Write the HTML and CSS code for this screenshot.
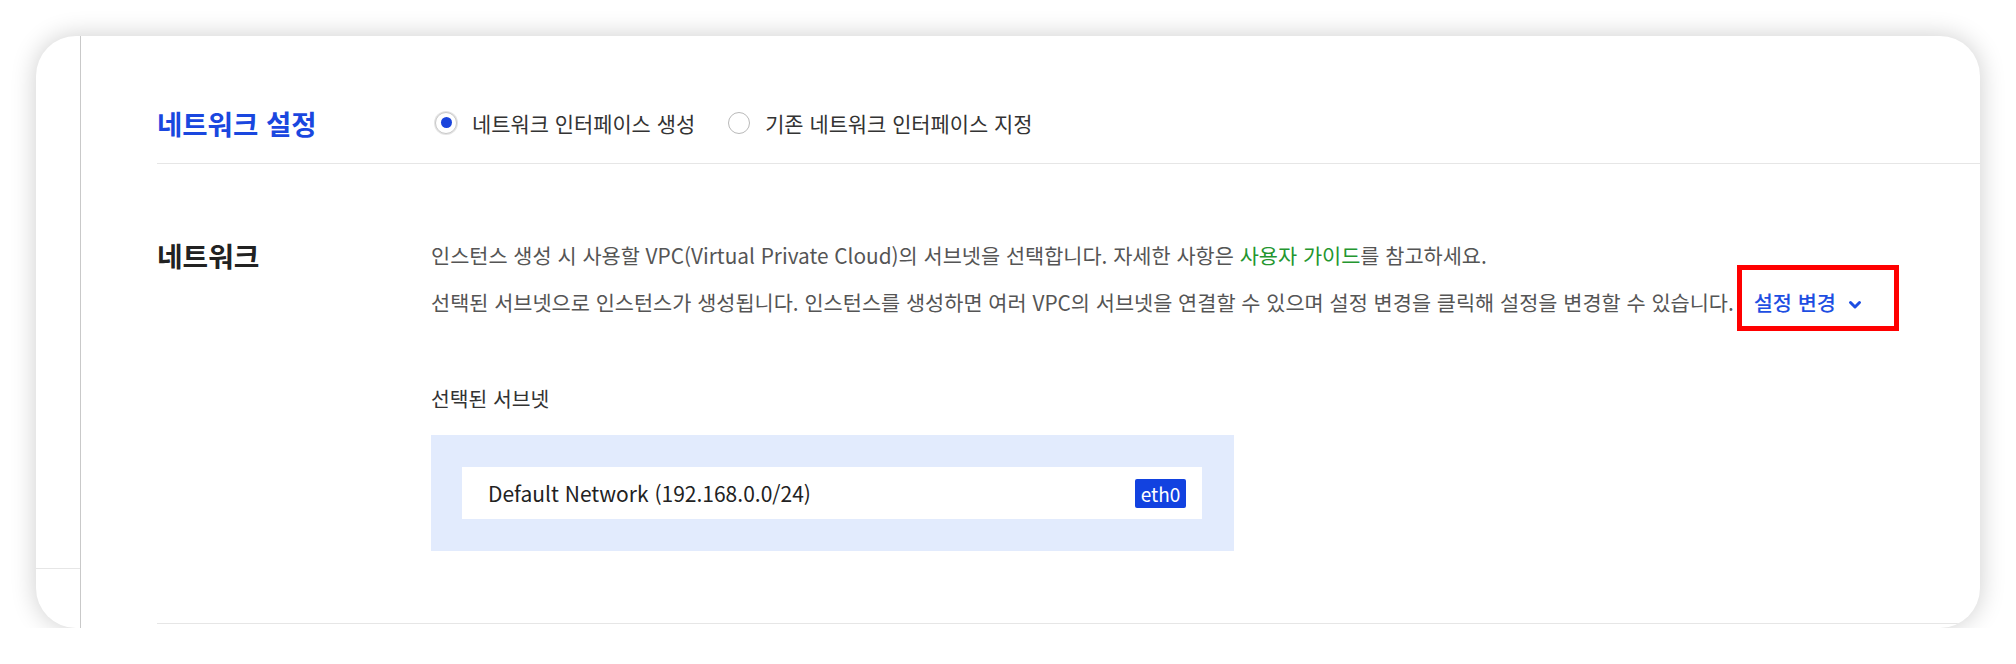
FILE: index.html
```html
<!DOCTYPE html>
<html lang="ko">
<head>
<meta charset="utf-8">
<title>네트워크 설정</title>
<link rel="stylesheet" href="styles.css">
</head>
<body>
<div class="card">
  <aside class="rail">
    <div class="rail-top"></div>
    <div class="rail-bottom"></div>
  </aside>
  <main class="content">
    <section class="row head">
      <h2 class="title">네트워크 설정</h2>
      <div class="radios">
        <label class="radio checked"><span class="circle"></span><span>네트워크 인터페이스 생성</span></label>
        <label class="radio"><span class="circle"></span><span>기존 네트워크 인터페이스 지정</span></label>
      </div>
    </section>
    <section class="row net">
      <h3 class="label">네트워크</h3>
      <div class="body">
        <p class="desc">인스턴스 생성 시 사용할 VPC(Virtual Private Cloud)의 서브넷을 선택합니다. 자세한 사항은 <a class="guide">사용자 가이드</a>를 참고하세요.</p>
        <p class="desc">선택된 서브넷으로 인스턴스가 생성됩니다. 인스턴스를 생성하면 여러 VPC의 서브넷을 연결할 수 있으며 설정 변경을 클릭해 설정을 변경할 수 있습니다. <a class="change">설정 변경<svg class="chev" width="14" height="10" viewBox="0 0 14 10"><polyline points="2.5,2.5 7,7 11.5,2.5" fill="none" stroke="#1d4ee2" stroke-width="3" stroke-linecap="round" stroke-linejoin="round"/></svg></a></p>
        <h4 class="sub-title">선택된 서브넷</h4>
        <div class="subnets">
          <div class="subnet">
            <span class="subnet-name">Default Network (192.168.0.0/24)</span>
            <span class="badge">eth0</span>
          </div>
        </div>
      </div>
    </section>
  </main>
</div>
</body>
</html>
```

FILE: styles.css
```css
html, body {
  margin: 0;
  padding: 0;
  background: #ffffff;
}

body {
  font-family: "Noto Sans CJK KR", "Noto Sans", sans-serif;
  color: #333;
}

.card {
  margin: 36px 36px 0 36px;
  height: 592px;
  background: #fff;
  border-radius: 40px;
  box-shadow: 0 0 26px rgba(0, 0, 0, 0.2);
  overflow: hidden;
  display: flex;
}

.rail {
  width: 44px;
  border-right: 1px solid #c9c9c9;
  display: flex;
  flex-direction: column;
}

.rail-top {
  height: 532px;
  border-bottom: 1px solid #e6e6e6;
}

.content {
  flex: 1;
  padding-left: 76px;
}

.row {
  display: grid;
  grid-template-columns: 274px 1fr;
}

.head {
  height: 128px;
  box-sizing: border-box;
  padding-top: 46px;
  align-items: center;
  border-bottom: 1px solid #e6e6e6;
}

.title {
  margin: 0;
  font-size: 27.5px;
  font-weight: 700;
  color: #1a47df;
  line-height: 38px;
}

.radios {
  display: flex;
  align-items: center;
  padding-left: 4px;
  gap: 33px;
}

.radio {
  display: flex;
  align-items: center;
  gap: 15px;
  font-size: 20.9px;
  color: #333;
  line-height: 30px;
}

.circle {
  width: 22px;
  height: 22px;
  box-sizing: border-box;
  border-radius: 50%;
  border: 1px solid #b9b9b9;
  background: #fff;
  display: flex;
  align-items: center;
  justify-content: center;
}

.checked .circle {
  border-color: #c9c9c9;
  box-shadow: 0 0 0 1px #e4e4e4;
}

.checked .circle::after {
  content: "";
  width: 11px;
  height: 11px;
  border-radius: 50%;
  background: #1a44dc;
}

.net {
  padding-top: 68px;
  padding-bottom: 72px;
  border-bottom: 1px solid #e6e6e6;
}

.label {
  margin: 0;
  font-size: 27.8px;
  font-weight: 700;
  color: #222;
  line-height: 47px;
}

.desc {
  margin: 0;
  font-size: 20.8px;
  line-height: 47px;
  color: #555;
  white-space: nowrap;
}

.guide {
  color: #24962f;
}

.change {
  position: relative;
  display: inline-block;
  margin-left: 14px;
  color: #1d4ee2;
  font-weight: 500;
}

.change::after {
  content: "";
  position: absolute;
  left: -17px;
  right: -37px;
  top: -14px;
  bottom: -5px;
  border: 5px solid #ff0000;
}

.chev {
  margin-left: 12px;
  vertical-align: middle;
}

.sub-title {
  margin: 57px 0 22px;
  font-size: 20.4px;
  font-weight: 400;
  color: #333;
  line-height: 30px;
}

.subnets {
  width: 803px;
  box-sizing: border-box;
  padding: 32px 32px 32px 31px;
  background: #e2ebfd;
}

.subnet {
  height: 52px;
  box-sizing: border-box;
  background: #fff;
  display: flex;
  align-items: center;
  justify-content: space-between;
  padding: 0 16px 0 26px;
}

.subnet-name {
  font-size: 21px;
  color: #222;
}

.badge {
  height: 29px;
  width: 51px;
  box-sizing: border-box;
  border-radius: 2px;
  background: #1242e0;
  color: #fff;
  font-size: 19px;
  line-height: 29px;
  text-align: center;
}
```
